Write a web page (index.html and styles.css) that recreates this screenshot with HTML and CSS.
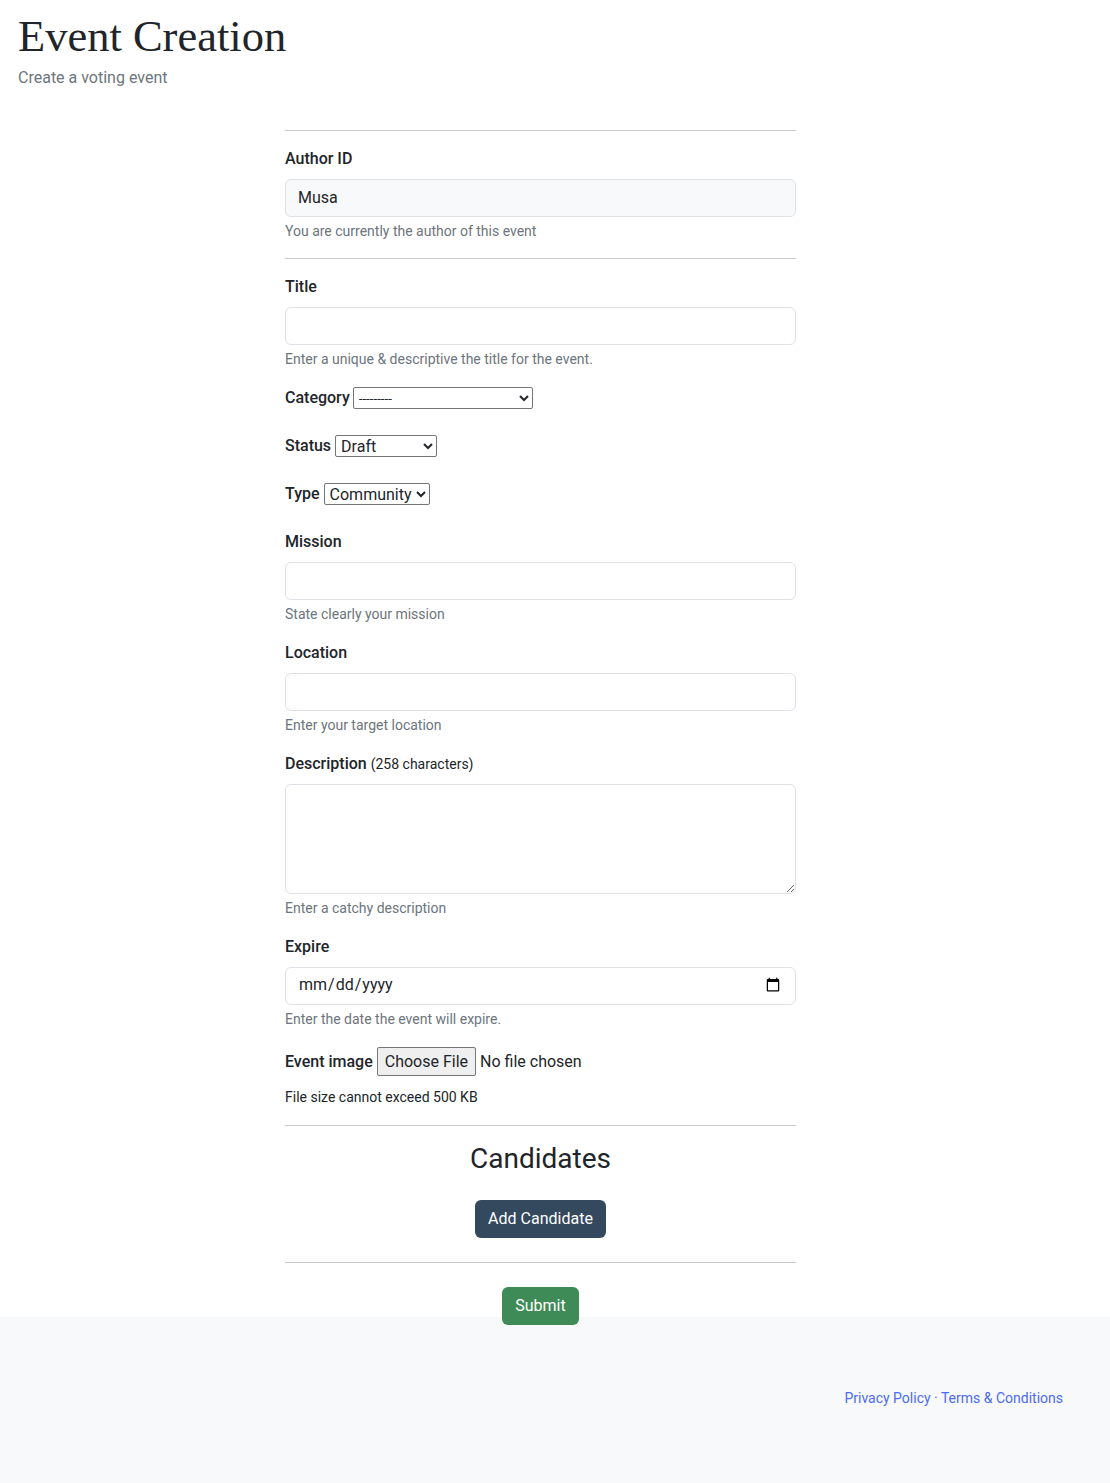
FILE: index.html
```html
<!DOCTYPE html>
<html lang="en">
<head>
<meta charset="utf-8">
<title>Event Creation</title>
<link rel="stylesheet" href="styles.css">
</head>
<body>
<main class="page">
  <header class="page-head">
    <h1 class="page-title">Event Creation</h1>
    <p class="page-sub">Create a voting event</p>
  </header>

  <form class="event-form">
    <hr class="rule">
    <div class="group">
      <label class="form-label" for="author">Author ID</label>
      <input class="form-control readonly" id="author" type="text" value="Musa" readonly>
      <div class="form-text">You are currently the author of this event</div>
    </div>
    <hr class="rule">
    <div class="group">
      <label class="form-label" for="title">Title</label>
      <input class="form-control" id="title" type="text">
      <div class="form-text">Enter a unique &amp; descriptive the title for the event.</div>
    </div>
    <div class="inline-row">
      <label class="form-label-inline" for="category">Category</label>
      <select id="category" class="sel sel-cat"><option>---------</option></select>
    </div>
    <div class="inline-row">
      <label class="form-label-inline" for="status">Status</label>
      <select id="status" class="sel sel-big sel-status"><option>Draft</option></select>
    </div>
    <div class="inline-row">
      <label class="form-label-inline" for="type">Type</label>
      <select id="type" class="sel sel-big"><option>Community</option></select>
    </div>
    <div class="group">
      <label class="form-label" for="mission">Mission</label>
      <input class="form-control" id="mission" type="text">
      <div class="form-text">State clearly your mission</div>
    </div>
    <div class="group">
      <label class="form-label" for="location">Location</label>
      <input class="form-control" id="location" type="text">
      <div class="form-text">Enter your target location</div>
    </div>
    <div class="group">
      <label class="form-label" for="desc">Description <span class="label-note">(258 characters)</span></label>
      <textarea class="form-control textarea" id="desc"></textarea>
      <div class="form-text">Enter a catchy description</div>
    </div>
    <div class="group">
      <label class="form-label" for="expire">Expire</label>
      <input class="form-control" id="expire" type="date">
      <div class="form-text">Enter the date the event will expire.</div>
    </div>
    <div class="file-row">
      <label class="form-label-inline" for="image">Event image</label>
      <input class="file-input" id="image" type="file">
    </div>
    <p class="file-note">File size cannot exceed 500 KB</p>
    <hr class="rule">
    <section class="candidates">
      <h3 class="cand-title">Candidates</h3>
      <button type="button" class="btn btn-dark">Add Candidate</button>
    </section>
    <hr class="rule">
    <div class="submit-row">
      <button type="submit" class="btn btn-green">Submit</button>
    </div>
  </form>
</main>
<footer class="site-foot">
  <div class="foot-links">
    <a href="#" class="foot-link">Privacy Policy</a><span class="foot-dot"> · </span><a href="#" class="foot-link">Terms &amp; Conditions</a>
  </div>
</footer>
</body>
</html>
```
FILE: styles.css
```css
* { box-sizing: border-box; }
html, body { margin: 0; padding: 0; }
body {
  font-family: Roboto, "Liberation Sans", Arial, sans-serif;
  font-size: 16px;
  line-height: 1.5;
  color: #212529;
  background: #fff;
}
.page { padding: 10px 0 0; }
.page-head { padding-left: 18px; }
.page-title {
  margin: 0;
  font-family: "Liberation Serif", "Times New Roman", serif;
  font-weight: 400;
  font-size: 44.5px;
  line-height: 53px;
  color: #212529;
}
.page-sub {
  margin: 3px 0 0;
  color: #6c757d;
  font-size: 16px;
  line-height: 24px;
}
.event-form {
  width: 511px;
  margin: 40px 0 0 285px;
  position: relative;
  z-index: 1;
}
.rule {
  border: 0;
  border-top: 1px solid #c8c9ca;
  margin: 0 0 16px;
  height: 0;
}
.group { margin-bottom: 16px; }
.form-label {
  display: block;
  font-weight: 500;
  margin-bottom: 8px;
  line-height: 24px;
}
.label-note { font-weight: 400; font-size: 14px; }
.form-label-inline { font-weight: 500; }
.form-control {
  display: block;
  width: 100%;
  height: 38px;
  padding: 5px 12px 7px;
  font-family: Roboto, "Liberation Sans", Arial, sans-serif;
  font-size: 16px;
  line-height: 24px;
  color: #212529;
  background: #fff;
  border: 1px solid #dee2e6;
  border-radius: 6px;
  outline: none;
}
.form-control.readonly { background: #f8f9fa; }
.textarea { height: 110px; resize: vertical; }
.form-text {
  margin-top: 4px;
  font-size: 14px;
  line-height: 21px;
  color: #6c757d;
}
.inline-row {
  line-height: 24px;
  height: 24px;
  margin-bottom: 24px;
  display: flex;
  align-items: center;
  gap: 4px;
}
.sel {
  height: 22px;
  font-family: Roboto, "Liberation Sans", Arial, sans-serif;
  font-size: 13.33px;
  color: #212529;
  border: 1px solid #767676;
  border-radius: 2px;
  background: #fff;
  padding: 0 1px;
}
.sel-cat { width: 180px; margin-left: -1px; }
.sel-big { font-size: 16px; }
.sel-status { width: 102px; }
.file-row {
  display: flex;
  align-items: center;
  gap: 4px;
  height: 31px;
}
.file-input {
  font-family: Roboto, "Liberation Sans", Arial, sans-serif;
  font-size: 16px;
  color: #212529;
}
.file-input::file-selector-button {
  height: 29px;
  padding: 0 7px;
  margin-right: 4px;
  font-family: Roboto, "Liberation Sans", Arial, sans-serif;
  font-size: 16px;
  color: #212529;
  background: #efefef;
  border: 1px solid #767676;
  border-radius: 2px;
}
.file-note {
  margin: 10px 0 0;
  font-size: 14px;
  line-height: 21px;
  padding-bottom: 17px;
}
.candidates {
  text-align: center;
  padding-bottom: 24px;
}
.cand-title {
  margin: 0 0 24px;
  font-size: 28px;
  font-weight: 400;
  line-height: 34px;
}
.btn {
  display: inline-block;
  height: 38px;
  padding: 6px 13px;
  font-family: Roboto, "Liberation Sans", Arial, sans-serif;
  font-size: 16px;
  line-height: 24px;
  color: #fff;
  border: 0;
  border-radius: 6px;
}
.btn-dark { background: #34495e; }
.btn-green { background: #3f8b57; }
.candidates + .rule { margin-bottom: 24px; }
.submit-row {
  text-align: center;
  margin-bottom: -8px;
}
.site-foot {
  background: #f8f9fa;
  height: 166px;
  padding: 71px 47px 0 0;
  display: flex;
  justify-content: flex-end;
}
.foot-links { font-size: 14px; line-height: 21px; }
.foot-link { color: #4a6cf4; text-decoration: none; }
.foot-dot { color: #4a6cf4; }
```
